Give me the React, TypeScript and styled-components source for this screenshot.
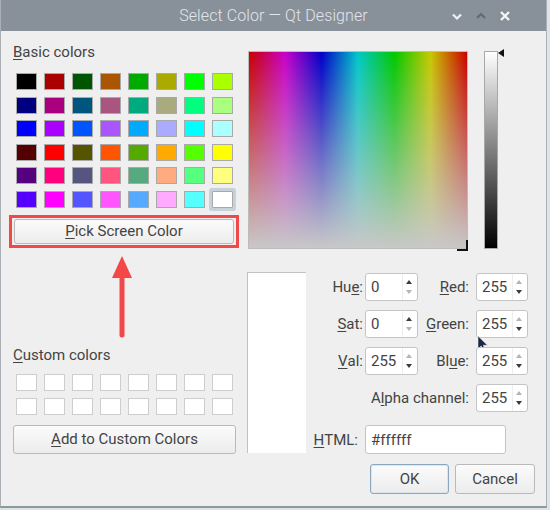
import React from 'react'
import styled, { createGlobalStyle } from 'styled-components'

const GlobalStyle = createGlobalStyle`
  html, body {
    margin: 0;
    padding: 0;
    background: #dfe3e6;
  }
  body {
    font-family: Roboto, 'Liberation Sans', sans-serif;
    color: #434343;
  }
`

const Window = styled.div`
  width: 547px;
  height: 508px;
  box-sizing: border-box;
  background: #efefef;
  border-left: 1px solid #a9afb4;
  border-right: 1px solid #a9afb4;
  border-bottom: 2px solid #8b9a9c;
  display: flex;
  flex-direction: column;
`

const TitleBar = styled.div`
  height: 31px;
  flex-shrink: 0;
  background: #88909a;
  display: grid;
  grid-template-columns: 1fr auto 1fr;
  align-items: center;
`

const Title = styled.span`
  grid-column: 2;
  font-size: 16px;
  font-weight: 300;
  color: #e2e6ea;
  letter-spacing: 0.1px;
`

const Controls = styled.div`
  grid-column: 3;
  justify-self: end;
  display: flex;
  align-items: center;
  gap: 6px;
  padding-right: 32px;
`

const ControlIcon = styled.svg`
  width: 18px;
  height: 18px;
  display: block;
`

const Body = styled.div`
  flex: 1;
  display: flex;
  gap: 11px;
  padding: 0 11px 0 12px;
`

const LeftColumn = styled.div`
  width: 223px;
  display: flex;
  flex-direction: column;
`

const SectionLabel = styled.div<{ $top: number }>`
  margin-top: ${p => p.$top}px;
  font-size: 15px;
  line-height: 18px;
  height: 18px;
`

const Mnemonic = styled.u`
  text-decoration-thickness: 1px;
  text-underline-offset: 2px;
`

const SwatchGrid = styled.div<{ $top: number; $rowGap: number }>`
  margin-top: ${p => p.$top}px;
  padding-left: 3px;
  display: grid;
  grid-template-columns: repeat(8, 21px);
  grid-auto-rows: 17px;
  column-gap: 7px;
  row-gap: ${p => p.$rowGap}px;
`

const Swatch = styled.div<{ $color: string; $selected?: boolean; $empty?: boolean }>`
  box-sizing: border-box;
  background: ${p => p.$color};
  border: 1px solid ${p => (p.$empty ? '#cdcdcd' : '#a9a9a9')};
  box-shadow: ${p => (p.$selected ? '0 0 0 3px #c6d1da' : 'none')};
  border-radius: ${p => (p.$selected ? '1px' : '0')};
`

// annotation box drawn around the pick button in the screenshot
const RedFrame = styled.div`
  margin-top: 7px;
  margin-left: -4px;
  width: 230px;
  box-sizing: border-box;
  border: 3px solid #f24848;
  padding: 1px 2px;
`

const PushButton = styled.button<{ $width: number; $height: number; $top: number; $default?: boolean }>`
  display: block;
  margin-top: ${p => p.$top}px;
  width: ${p => p.$width}px;
  height: ${p => p.$height}px;
  box-sizing: border-box;
  padding: 0;
  font-family: inherit;
  font-size: 15px;
  color: #434343;
  background: linear-gradient(#fbfbfb, #ececec);
  border: 1px solid ${p => (p.$default ? '#8aa7bf' : '#b9b9b9')};
  box-shadow: ${p => (p.$default ? 'inset 0 0 0 1px #dbe6ef' : 'none')};
  border-radius: 3px;
  outline: none;
`

const ArrowMark = styled.svg`
  display: block;
  margin-top: 7px;
  margin-left: 97px;
  width: 24px;
  height: 84px;
`

const RightColumn = styled.div`
  flex: 1;
  display: flex;
  flex-direction: column;
`

const PickerRow = styled.div`
  margin-top: 20px;
  display: flex;
  align-items: flex-start;
`

const HueSatBox = styled.div`
  position: relative;
  margin-left: 1px;
  width: 220px;
  height: 198px;
  box-sizing: border-box;
  border: 1px solid #bcbcbc;
  background:
    linear-gradient(to bottom, rgba(200, 200, 200, 0), #c8c8c8),
    linear-gradient(to right, #c80000, #c800c8 16.7%, #0000c8 33.3%, #00c8c8 50%, #00c800 66.7%, #c8c800 83.3%, #c80000);
`

const Crosshair = styled.div`
  position: absolute;
  right: -1px;
  bottom: -3px;
  width: 11px;
  height: 11px;
  box-sizing: border-box;
  border-right: 2px solid #111;
  border-bottom: 2px solid #111;
`

const LumSlider = styled.div`
  position: relative;
  margin-left: 16px;
  width: 14px;
  height: 198px;
  box-sizing: border-box;
  border: 1px solid #a8a8a8;
  background: linear-gradient(#ffffff, #000000);
`

const LumPointer = styled.div`
  position: absolute;
  right: -7px;
  top: -3px;
  width: 0;
  height: 0;
  border-top: 4px solid transparent;
  border-bottom: 4px solid transparent;
  border-right: 6px solid #111;
`

const ValuesRow = styled.div`
  margin-top: 23px;
  display: flex;
  align-items: flex-start;
`

const Preview = styled.div`
  width: 59px;
  height: 181px;
  box-sizing: border-box;
  background: #fff;
  border-top: 1px solid #c2c2c2;
  border-left: 1px solid #c2c2c2;
`

const FieldGrid = styled.div`
  margin-top: 1px;
  display: grid;
  grid-template-columns: 59px 53px 58px 52px;
  grid-auto-rows: 28px;
  row-gap: 9px;
`

const FieldLabel = styled.label<{ $pad: number; $span?: string }>`
  grid-column: ${p => p.$span || 'auto'};
  display: flex;
  align-items: center;
  justify-content: flex-end;
  padding-right: ${p => p.$pad}px;
  font-size: 15px;
  white-space: nowrap;
`

const SpinFrame = styled.div`
  position: relative;
  display: flex;
  box-sizing: border-box;
  background: #fff;
  border: 1px solid #c4c4c4;
  border-radius: 3px;
`

const SpinText = styled.span`
  flex: 1;
  display: flex;
  align-items: center;
  padding-left: 5px;
  font-size: 15px;
`

const SpinArrows = styled.div`
  width: 12px;
  margin-right: 2px;
  border-left: 1px solid #eeeeee;
  display: flex;
  flex-direction: column;
  justify-content: space-around;
  align-items: center;
  padding: 3px 0;
`

const Tri = styled.div<{ $up: boolean; $on: boolean }>`
  width: 0;
  height: 0;
  border-left: 3.5px solid transparent;
  border-right: 3.5px solid transparent;
  ${p => (p.$up ? 'border-bottom' : 'border-top')}: 4px solid ${p => (p.$on ? '#3a3a3a' : '#b4b4b4')};
`

const HtmlRow = styled.div`
  grid-column: 1 / 5;
  margin-top: 4px;
  height: 29px;
  display: grid;
  grid-template-columns: 59px 141px;
`

const LineEdit = styled.div`
  box-sizing: border-box;
  height: 29px;
  background: #fff;
  border: 1px solid #c4c4c4;
  border-radius: 3px;
  display: flex;
  align-items: center;
  padding-left: 5px;
  font-size: 15px;
`

const ButtonRow = styled.div`
  margin-top: 11px;
  display: flex;
  justify-content: flex-end;
  gap: 6px;
`

const Cursor = styled.svg`
  position: absolute;
  left: 0;
  top: 24px;
  width: 12px;
  height: 18px;
`

const basicColors = [
  '#000000', '#aa0000', '#005500', '#aa5500', '#00aa00', '#aaaa00', '#00ff00', '#aaff00',
  '#00007f', '#aa007f', '#00557f', '#aa557f', '#00aa7f', '#aaaa7f', '#00ff7f', '#aaff7f',
  '#0000ff', '#aa00ff', '#0055ff', '#aa55ff', '#00aaff', '#aaaaff', '#00ffff', '#aaffff',
  '#550000', '#ff0000', '#555500', '#ff5500', '#55aa00', '#ffaa00', '#55ff00', '#ffff00',
  '#55007f', '#ff007f', '#55557f', '#ff557f', '#55aa7f', '#ffaa7f', '#55ff7f', '#ffff7f',
  '#5500ff', '#ff00ff', '#5555ff', '#ff55ff', '#55aaff', '#ffaaff', '#55ffff', '#ffffff',
]

interface SpinProps {
  value: string
  up: boolean
  down: boolean
  children?: React.ReactNode
}

const SpinBox: React.FC<SpinProps> = ({ value, up, down, children }) => (
  <SpinFrame>
    <SpinText>{value}</SpinText>
    <SpinArrows>
      <Tri $up $on={up} />
      <Tri $up={false} $on={down} />
    </SpinArrows>
    {children}
  </SpinFrame>
)

const App: React.FC = () => {
  return (
    <>
      <GlobalStyle />
      <Window>
        <TitleBar>
          <Title>Select Color — Qt Designer</Title>
          <Controls>
            <ControlIcon viewBox="0 0 18 18">
              <path d="M5 7.5 L9 11.5 L13 7.5" fill="none" stroke="#eef1f4" strokeWidth="2.2" />
            </ControlIcon>
            <ControlIcon viewBox="0 0 18 18">
              <path d="M5 11 L9 7 L13 11" fill="none" stroke="#626a72" strokeWidth="2.2" />
            </ControlIcon>
            <ControlIcon viewBox="0 0 18 18">
              <path d="M5 5 L13 13 M13 5 L5 13" fill="none" stroke="#f4f6f8" strokeWidth="2.4" />
            </ControlIcon>
          </Controls>
        </TitleBar>
        <Body>
          <LeftColumn>
            <SectionLabel $top={12}>
              <Mnemonic>B</Mnemonic>asic colors
            </SectionLabel>
            <SwatchGrid $top={12} $rowGap={6.6}>
              {basicColors.map((c, i) => (
                <Swatch key={i} $color={c} $selected={i === basicColors.length - 1} />
              ))}
            </SwatchGrid>
            <RedFrame>
              <PushButton $width={220} $height={25} $top={0}>
                <Mnemonic>P</Mnemonic>ick Screen Color
              </PushButton>
            </RedFrame>
            <ArrowMark viewBox="0 0 24 84">
              <polygon points="12,1 22,23 2,23" fill="#f44848" />
              <line x1="12" y1="20" x2="12" y2="80" stroke="#f44848" strokeWidth="5" strokeLinecap="round" />
            </ArrowMark>
            <SectionLabel $top={7}>
              <Mnemonic>C</Mnemonic>ustom colors
            </SectionLabel>
            <SwatchGrid $top={10} $rowGap={7}>
              {Array.from({ length: 16 }).map((_, i) => (
                <Swatch key={i} $color="#ffffff" $empty />
              ))}
            </SwatchGrid>
            <PushButton $width={223} $height={29} $top={10}>
              <Mnemonic>A</Mnemonic>dd to Custom Colors
            </PushButton>
          </LeftColumn>
          <RightColumn>
            <PickerRow>
              <HueSatBox>
                <Crosshair />
              </HueSatBox>
              <LumSlider>
                <LumPointer />
              </LumSlider>
            </PickerRow>
            <ValuesRow>
              <Preview />
              <FieldGrid>
                <FieldLabel $pad={2}>
                  Hu<Mnemonic>e</Mnemonic>:
                </FieldLabel>
                <SpinBox value="0" up down={false} />
                <FieldLabel $pad={7}>
                  <Mnemonic>R</Mnemonic>ed:
                </FieldLabel>
                <SpinBox value="255" up={false} down />

                <FieldLabel $pad={2}>
                  <Mnemonic>S</Mnemonic>at:
                </FieldLabel>
                <SpinBox value="0" up down={false} />
                <FieldLabel $pad={7}>
                  <Mnemonic>G</Mnemonic>reen:
                </FieldLabel>
                <SpinBox value="255" up={false} down>
                  <Cursor viewBox="0 0 12 18">
                    <path d="M1 1 L1 14 L4.2 11 L6.6 16.5 L8.6 15.6 L6.3 10.3 L10.5 10.3 Z" fill="#1c2742" stroke="#e8ecf2" strokeWidth="0.6" />
                  </Cursor>
                </SpinBox>

                <FieldLabel $pad={2}>
                  <Mnemonic>V</Mnemonic>al:
                </FieldLabel>
                <SpinBox value="255" up={false} down />
                <FieldLabel $pad={7}>
                  Bl<Mnemonic>u</Mnemonic>e:
                </FieldLabel>
                <SpinBox value="255" up={false} down />

                <FieldLabel $pad={7} $span="1 / 4">
                  A<Mnemonic>l</Mnemonic>pha channel:
                </FieldLabel>
                <SpinBox value="255" up={false} down />

                <HtmlRow>
                  <FieldLabel $pad={7}>
                    <Mnemonic>H</Mnemonic>TML:
                  </FieldLabel>
                  <LineEdit>#ffffff</LineEdit>
                </HtmlRow>
              </FieldGrid>
            </ValuesRow>
            <ButtonRow>
              <PushButton $width={79} $height={30} $top={0} $default>
                OK
              </PushButton>
              <PushButton $width={80} $height={30} $top={0}>
                Cancel
              </PushButton>
            </ButtonRow>
          </RightColumn>
        </Body>
      </Window>
    </>
  )
}

export default App
